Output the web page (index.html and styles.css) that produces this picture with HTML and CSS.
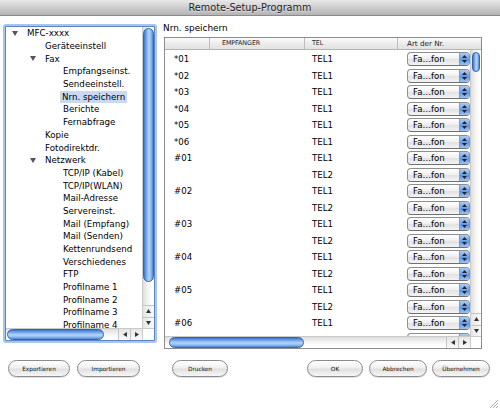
FILE: index.html
```html
<!DOCTYPE html>
<html lang="de">
<head>
<meta charset="utf-8">
<title>Remote-Setup-Programm</title>
<link rel="stylesheet" href="styles.css">
</head>
<body>
<div class="window">
  <div class="titlebar">Remote-Setup-Programm</div>
  <div class="main">
    <div class="tree-frame">
      <div class="tree">
        <div class="row tw lvl0"><span class="twisty"><svg width="6" height="5" viewBox="0 0 6 5"><polygon points="0,0 6,0 3,5" fill="#555"/></svg></span><span class="lbl">MFC-xxxx</span></div>
        <div class="row lvl1"><span class="lbl">Geräteeinstell</span></div>
        <div class="row tw lvl1"><span class="twisty"><svg width="6" height="5" viewBox="0 0 6 5"><polygon points="0,0 6,0 3,5" fill="#555"/></svg></span><span class="lbl">Fax</span></div>
        <div class="row lvl2"><span class="lbl">Empfangseinst.</span></div>
        <div class="row lvl2"><span class="lbl">Sendeeinstell.</span></div>
        <div class="row lvl2"><span class="lbl sel">Nrn. speichern</span></div>
        <div class="row lvl2"><span class="lbl">Berichte</span></div>
        <div class="row lvl2"><span class="lbl">Fernabfrage</span></div>
        <div class="row lvl1"><span class="lbl">Kopie</span></div>
        <div class="row lvl1"><span class="lbl">Fotodirektdr.</span></div>
        <div class="row tw lvl1"><span class="twisty"><svg width="6" height="5" viewBox="0 0 6 5"><polygon points="0,0 6,0 3,5" fill="#555"/></svg></span><span class="lbl">Netzwerk</span></div>
        <div class="row lvl2"><span class="lbl">TCP/IP (Kabel)</span></div>
        <div class="row lvl2"><span class="lbl">TCP/IP(WLAN)</span></div>
        <div class="row lvl2"><span class="lbl">Mail-Adresse</span></div>
        <div class="row lvl2"><span class="lbl">Servereinst.</span></div>
        <div class="row lvl2"><span class="lbl">Mail (Empfang)</span></div>
        <div class="row lvl2"><span class="lbl">Mail (Senden)</span></div>
        <div class="row lvl2"><span class="lbl">Kettenrundsend</span></div>
        <div class="row lvl2"><span class="lbl">Verschiedenes</span></div>
        <div class="row lvl2"><span class="lbl">FTP</span></div>
        <div class="row lvl2"><span class="lbl">Profilname 1</span></div>
        <div class="row lvl2"><span class="lbl">Profilname 2</span></div>
        <div class="row lvl2"><span class="lbl">Profilname 3</span></div>
        <div class="row lvl2"><span class="lbl">Profilname 4</span></div>
      </div>
      <div class="vscroll">
        <div class="thumb-v tree-thumb"></div>
        <div class="spacer"></div>
        <div class="arrow-v"><svg width="5" height="4" viewBox="0 0 5 4"><polygon points="2.5,0 5,4 0,4" fill="#333"/></svg></div>
        <div class="arrow-v"><svg width="5" height="4" viewBox="0 0 5 4"><polygon points="0,0 5,0 2.5,4" fill="#333"/></svg></div>
      </div>
      <div class="hscroll">
        <div class="thumb-h tree-hthumb"></div>
        <div class="spacer"></div>
        <div class="arrow-h"><svg width="4" height="5" viewBox="0 0 4 5"><polygon points="0,2.5 4,0 4,5" fill="#333"/></svg></div>
        <div class="arrow-h"><svg width="4" height="5" viewBox="0 0 4 5"><polygon points="0,0 4,2.5 0,5" fill="#333"/></svg></div>
      </div>
      <div class="corner"></div>
    </div>

    <div class="right">
      <div class="section-label">Nrn. speichern</div>
      <div class="table-frame">
        <div class="thead">
          <div class="th c1"></div>
          <div class="th c2 small">EMPFANGER</div>
          <div class="th c3 small">TEL</div>
          <div class="th c4">Art der Nr.</div>
        </div>
        <div class="tbody">
          <div class="rows">
            <div class="tr"><div class="td c1">*01</div><div class="td c2"></div><div class="td c3">TEL1</div><div class="td c4"><div class="popup"><span class="ptext">Fa…fon</span><span class="pbtn"><svg width="5" height="8" viewBox="0 0 5 8"><polygon points="2.5,0 5,3 0,3" fill="#223"/><polygon points="0,5 5,5 2.5,8" fill="#223"/></svg></span></div></div></div>
            <div class="tr"><div class="td c1">*02</div><div class="td c2"></div><div class="td c3">TEL1</div><div class="td c4"><div class="popup"><span class="ptext">Fa…fon</span><span class="pbtn"><svg width="5" height="8" viewBox="0 0 5 8"><polygon points="2.5,0 5,3 0,3" fill="#223"/><polygon points="0,5 5,5 2.5,8" fill="#223"/></svg></span></div></div></div>
            <div class="tr"><div class="td c1">*03</div><div class="td c2"></div><div class="td c3">TEL1</div><div class="td c4"><div class="popup"><span class="ptext">Fa…fon</span><span class="pbtn"><svg width="5" height="8" viewBox="0 0 5 8"><polygon points="2.5,0 5,3 0,3" fill="#223"/><polygon points="0,5 5,5 2.5,8" fill="#223"/></svg></span></div></div></div>
            <div class="tr"><div class="td c1">*04</div><div class="td c2"></div><div class="td c3">TEL1</div><div class="td c4"><div class="popup"><span class="ptext">Fa…fon</span><span class="pbtn"><svg width="5" height="8" viewBox="0 0 5 8"><polygon points="2.5,0 5,3 0,3" fill="#223"/><polygon points="0,5 5,5 2.5,8" fill="#223"/></svg></span></div></div></div>
            <div class="tr"><div class="td c1">*05</div><div class="td c2"></div><div class="td c3">TEL1</div><div class="td c4"><div class="popup"><span class="ptext">Fa…fon</span><span class="pbtn"><svg width="5" height="8" viewBox="0 0 5 8"><polygon points="2.5,0 5,3 0,3" fill="#223"/><polygon points="0,5 5,5 2.5,8" fill="#223"/></svg></span></div></div></div>
            <div class="tr"><div class="td c1">*06</div><div class="td c2"></div><div class="td c3">TEL1</div><div class="td c4"><div class="popup"><span class="ptext">Fa…fon</span><span class="pbtn"><svg width="5" height="8" viewBox="0 0 5 8"><polygon points="2.5,0 5,3 0,3" fill="#223"/><polygon points="0,5 5,5 2.5,8" fill="#223"/></svg></span></div></div></div>
            <div class="tr"><div class="td c1">#01</div><div class="td c2"></div><div class="td c3">TEL1</div><div class="td c4"><div class="popup"><span class="ptext">Fa…fon</span><span class="pbtn"><svg width="5" height="8" viewBox="0 0 5 8"><polygon points="2.5,0 5,3 0,3" fill="#223"/><polygon points="0,5 5,5 2.5,8" fill="#223"/></svg></span></div></div></div>
            <div class="tr"><div class="td c1"></div><div class="td c2"></div><div class="td c3">TEL2</div><div class="td c4"><div class="popup"><span class="ptext">Fa…fon</span><span class="pbtn"><svg width="5" height="8" viewBox="0 0 5 8"><polygon points="2.5,0 5,3 0,3" fill="#223"/><polygon points="0,5 5,5 2.5,8" fill="#223"/></svg></span></div></div></div>
            <div class="tr"><div class="td c1">#02</div><div class="td c2"></div><div class="td c3">TEL1</div><div class="td c4"><div class="popup"><span class="ptext">Fa…fon</span><span class="pbtn"><svg width="5" height="8" viewBox="0 0 5 8"><polygon points="2.5,0 5,3 0,3" fill="#223"/><polygon points="0,5 5,5 2.5,8" fill="#223"/></svg></span></div></div></div>
            <div class="tr"><div class="td c1"></div><div class="td c2"></div><div class="td c3">TEL2</div><div class="td c4"><div class="popup"><span class="ptext">Fa…fon</span><span class="pbtn"><svg width="5" height="8" viewBox="0 0 5 8"><polygon points="2.5,0 5,3 0,3" fill="#223"/><polygon points="0,5 5,5 2.5,8" fill="#223"/></svg></span></div></div></div>
            <div class="tr"><div class="td c1">#03</div><div class="td c2"></div><div class="td c3">TEL1</div><div class="td c4"><div class="popup"><span class="ptext">Fa…fon</span><span class="pbtn"><svg width="5" height="8" viewBox="0 0 5 8"><polygon points="2.5,0 5,3 0,3" fill="#223"/><polygon points="0,5 5,5 2.5,8" fill="#223"/></svg></span></div></div></div>
            <div class="tr"><div class="td c1"></div><div class="td c2"></div><div class="td c3">TEL2</div><div class="td c4"><div class="popup"><span class="ptext">Fa…fon</span><span class="pbtn"><svg width="5" height="8" viewBox="0 0 5 8"><polygon points="2.5,0 5,3 0,3" fill="#223"/><polygon points="0,5 5,5 2.5,8" fill="#223"/></svg></span></div></div></div>
            <div class="tr"><div class="td c1">#04</div><div class="td c2"></div><div class="td c3">TEL1</div><div class="td c4"><div class="popup"><span class="ptext">Fa…fon</span><span class="pbtn"><svg width="5" height="8" viewBox="0 0 5 8"><polygon points="2.5,0 5,3 0,3" fill="#223"/><polygon points="0,5 5,5 2.5,8" fill="#223"/></svg></span></div></div></div>
            <div class="tr"><div class="td c1"></div><div class="td c2"></div><div class="td c3">TEL2</div><div class="td c4"><div class="popup"><span class="ptext">Fa…fon</span><span class="pbtn"><svg width="5" height="8" viewBox="0 0 5 8"><polygon points="2.5,0 5,3 0,3" fill="#223"/><polygon points="0,5 5,5 2.5,8" fill="#223"/></svg></span></div></div></div>
            <div class="tr"><div class="td c1">#05</div><div class="td c2"></div><div class="td c3">TEL1</div><div class="td c4"><div class="popup"><span class="ptext">Fa…fon</span><span class="pbtn"><svg width="5" height="8" viewBox="0 0 5 8"><polygon points="2.5,0 5,3 0,3" fill="#223"/><polygon points="0,5 5,5 2.5,8" fill="#223"/></svg></span></div></div></div>
            <div class="tr"><div class="td c1"></div><div class="td c2"></div><div class="td c3">TEL2</div><div class="td c4"><div class="popup"><span class="ptext">Fa…fon</span><span class="pbtn"><svg width="5" height="8" viewBox="0 0 5 8"><polygon points="2.5,0 5,3 0,3" fill="#223"/><polygon points="0,5 5,5 2.5,8" fill="#223"/></svg></span></div></div></div>
            <div class="tr"><div class="td c1">#06</div><div class="td c2"></div><div class="td c3">TEL1</div><div class="td c4"><div class="popup"><span class="ptext">Fa…fon</span><span class="pbtn"><svg width="5" height="8" viewBox="0 0 5 8"><polygon points="2.5,0 5,3 0,3" fill="#223"/><polygon points="0,5 5,5 2.5,8" fill="#223"/></svg></span></div></div></div>
            <div class="tr"><div class="td c1"></div><div class="td c2"></div><div class="td c3">TEL2</div><div class="td c4"><div class="popup"><span class="ptext">Fa…fon</span><span class="pbtn"><svg width="5" height="8" viewBox="0 0 5 8"><polygon points="2.5,0 5,3 0,3" fill="#223"/><polygon points="0,5 5,5 2.5,8" fill="#223"/></svg></span></div></div></div>
          </div>
          <div class="vscroll tvs">
            <div class="thumb-v table-thumb"></div>
            <div class="spacer"></div>
            <div class="arrow-v"><svg width="5" height="4" viewBox="0 0 5 4"><polygon points="2.5,0 5,4 0,4" fill="#333"/></svg></div>
            <div class="arrow-v"><svg width="5" height="4" viewBox="0 0 5 4"><polygon points="0,0 5,0 2.5,4" fill="#333"/></svg></div>
          </div>
        </div>
        <div class="tfoot">
          <div class="hscroll">
            <div class="thumb-h table-hthumb"></div>
            <div class="spacer"></div>
            <div class="arrow-h"><svg width="4" height="5" viewBox="0 0 4 5"><polygon points="0,2.5 4,0 4,5" fill="#333"/></svg></div>
            <div class="arrow-h"><svg width="4" height="5" viewBox="0 0 4 5"><polygon points="0,0 4,2.5 0,5" fill="#333"/></svg></div>
          </div>
          <div class="corner tcorner"></div>
        </div>
      </div>
    </div>
  </div>

  <div class="buttons">
    <button class="btn w62">Exportieren</button>
    <button class="btn w63 gap7">Importieren</button>
    <button class="btn w56 gap32">Drucken</button>
    <div class="spacer"></div>
    <button class="btn w56">OK</button>
    <button class="btn w58 gap6">Abbrechen</button>
    <button class="btn w58 gap5">Übernehmen</button>
  </div>

  <svg class="grip" width="9" height="9" viewBox="0 0 9 9">
    <line x1="1" y1="9" x2="9" y2="1" stroke="#999" stroke-width="0.8"/>
    <line x1="4" y1="9" x2="9" y2="4" stroke="#999" stroke-width="0.8"/>
    <line x1="7" y1="9" x2="9" y2="7" stroke="#999" stroke-width="0.8"/>
  </svg>
</div>
</body>
</html>
```
FILE: styles.css
```css
* { box-sizing: border-box; }
html, body { margin: 0; padding: 0; }
body {
  font-family: "DejaVu Sans", "Noto Sans", sans-serif;
  font-size: 8.6px;
  color: #000;
  background: #fff;
}
.window {
  position: relative;
  width: 500px;
  height: 411px;
  background: #fff;
  overflow: hidden;
}
.titlebar {
  height: 16px;
  border-bottom: 1px solid #8a8a8a;
  background: linear-gradient(#e9e9e9, #d0d0d0 45%, #b4b4b4 100%);
  text-align: center;
  font-size: 9.7px;
  line-height: 15px;
  color: #1e1e1e;
  text-shadow: 0 1px 0 rgba(255,255,255,0.55);
}
.main {
  display: flex;
  align-items: flex-start;
  padding-left: 5px;
}

/* ---------- tree ---------- */
.tree-frame {
  margin-top: 10px;
  width: 150px;
  height: 315px;
  border: 1px solid #5d84c2;
  box-shadow: 0 0 0 2px #a9c5ec;
  border-radius: 1px;
  display: grid;
  grid-template-columns: 1fr 12px;
  grid-template-rows: 1fr 12px;
  background: #fff;
}
.tree {
  overflow: hidden;
}
.row {
  height: 12.7px;
  display: flex;
  align-items: center;
  white-space: nowrap;
  font-size: 8.7px;
}
.lvl0 { padding-left: 20px; }
.lvl1 { padding-left: 38px; }
.lvl2 { padding-left: 56px; }
.row.tw.lvl0 { padding-left: 2px; }
.row.tw.lvl1 { padding-left: 20px; }
.twisty {
  width: 18px;
  display: flex;
  align-items: center;
  padding-left: 4px;
}
.lbl { padding: 0 1px; }
.lbl.sel {
  background: #c9d9f0;
  margin-left: -2px;
  padding: 0 2px;
  line-height: 12px;
}

/* ---------- scrollbars ---------- */
.vscroll {
  display: flex;
  flex-direction: column;
  border-left: 1px solid #c9c9c9;
  background: linear-gradient(to right, #dedede, #f4f4f4 45%, #fff 80%);
}
.hscroll {
  display: flex;
  align-items: stretch;
  border-top: 1px solid #c9c9c9;
  background: linear-gradient(#dedede, #f4f4f4 45%, #fff 80%);
}
.spacer { flex: 1; }
.thumb-v {
  margin: 1px 0 0 0;
  border: 1px solid #3465ae;
  border-radius: 6px;
  background: linear-gradient(to right, #3a74cc, #79acec 28%, #b5d5f8 55%, #8dbbef 78%, #4b84d4);
}
.thumb-h {
  margin: 0 0 0 1px;
  border: 1px solid #3465ae;
  border-radius: 6px;
  background: linear-gradient(#3a74cc, #79acec 28%, #b5d5f8 55%, #8dbbef 78%, #4b84d4);
}
.tree-thumb { height: 254px; }
.tree-hthumb { width: 97px; }
.arrow-v {
  height: 11.5px;
  display: flex;
  align-items: center;
  justify-content: center;
  border-top: 1px solid #c4c4c4;
  background: linear-gradient(to right, #e6e6e6, #fafafa);
}
.arrow-h {
  width: 12px;
  display: flex;
  align-items: center;
  justify-content: center;
  border-left: 1px solid #c4c4c4;
  background: linear-gradient(#e6e6e6, #fafafa);
}
.corner {
  border-top: 1px solid #c9c9c9;
  border-left: 1px solid #c9c9c9;
  background: #fff;
}

/* ---------- right side ---------- */
.right {
  margin-left: 9px;
  padding-top: 6px;
  width: 318px;
}
.section-label {
  height: 12px;
  line-height: 12px;
  font-size: 8.9px;
  margin-left: -1px;
}
.table-frame {
  margin-top: 3px;
  height: 312px;
  border: 1px solid #8c8c8c;
  display: flex;
  flex-direction: column;
}
.thead {
  height: 12px;
  display: flex;
  border-bottom: 1px solid #b3b3b3;
  background: linear-gradient(#fbfbfb, #ececec 50%, #e2e2e2);
}
.th {
  border-right: 1px solid #bdbdbd;
  line-height: 11px;
  font-size: 7.2px;
  color: #222;
  white-space: nowrap;
}
.th.small { font-size: 6.4px; letter-spacing: -0.1px; }
.c1 { width: 45px; }
.c2 { width: 95px; }
.c3 { width: 93px; }
.th.c4 { flex: 1; border-right: none; padding-left: 9px; }
.th.c2 { padding-left: 12px; }
.th.c3 { padding-left: 7px; }
.tbody {
  flex: 1;
  display: flex;
  min-height: 0;
}
.rows {
  flex: 1;
  overflow: hidden;
  padding-top: 1px;
}
.tr {
  height: 16.5px;
  display: flex;
  align-items: center;
}
.td { white-space: nowrap; }
.td.c1 { padding-left: 9px; }
.td.c3 { padding-left: 7px; }
.td.c4 { flex: 1; padding-left: 9px; }
.popup {
  width: 63px;
  height: 14px;
  display: flex;
  border: 1px solid #8e8e8e;
  border-bottom-color: #6f6f6f;
  border-radius: 4px;
  overflow: hidden;
  background: linear-gradient(#ffffff, #f1f1f1 45%, #e2e2e2 55%, #f4f4f4);
}
.ptext {
  flex: 1;
  padding-left: 5px;
  line-height: 12px;
  font-size: 8.6px;
}
.pbtn {
  width: 10px;
  display: flex;
  align-items: center;
  justify-content: center;
  border-left: 1px solid #7c9ccc;
  background: linear-gradient(#a9cbf4, #6fa3e6 50%, #5b94e0 55%, #9cc4f2);
}
.tvs { width: 11px; }
.table-thumb { height: 20px; margin-top: 2px; margin-left: 1px; margin-right: 1px; }
.tfoot {
  height: 12px;
  display: flex;
}
.tfoot .hscroll { flex: 1; }
.table-hthumb { width: 135px; margin-left: 4px; }
.tcorner { width: 11px; }

/* ---------- buttons ---------- */
.buttons {
  display: flex;
  align-items: center;
  margin-top: 11px;
  padding-left: 8px;
  padding-right: 10px;
}
.btn {
  height: 17px;
  padding: 0;
  border: 1px solid #8b8b8b;
  border-radius: 9px;
  background: linear-gradient(#ffffff, #f0f0f0 45%, #e0e0e0 55%, #f7f7f7);
  box-shadow: 0 1px 0 rgba(0,0,0,0.12);
  font-family: "DejaVu Sans", "Noto Sans", sans-serif;
  font-size: 5.8px;
  color: #111;
  text-align: center;
}
.w56 { width: 56px; }
.w58 { width: 58px; }
.w62 { width: 62px; }
.w63 { width: 63px; }
.gap5 { margin-left: 5px; }
.gap6 { margin-left: 6px; }
.gap7 { margin-left: 7px; }
.gap32 { margin-left: 32px; }

.grip {
  position: absolute;
  right: 2px;
  bottom: 3px;
}
```
